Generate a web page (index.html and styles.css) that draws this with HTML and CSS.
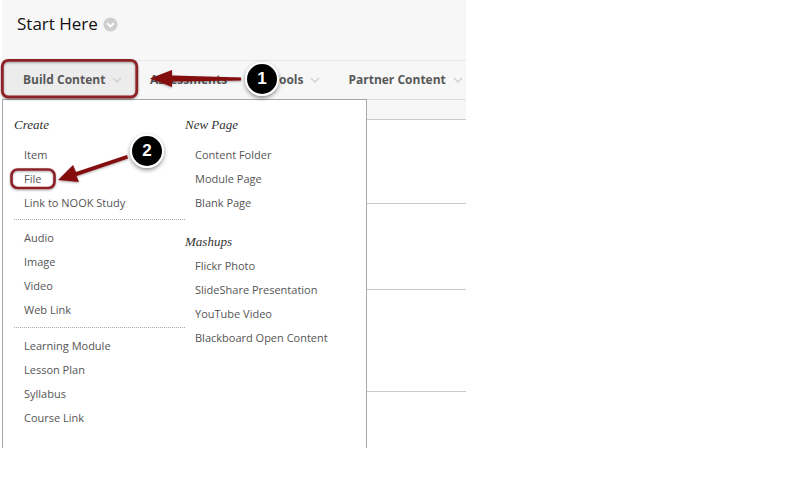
FILE: index.html
```html
<!DOCTYPE html>
<html lang="en">
<head>
<meta charset="utf-8">
<title>Start Here</title>
<link rel="stylesheet" href="styles.css">
</head>
<body>
<div class="page">
  <header class="title-bar">
    <h1 class="title">Start Here</h1>
    <svg class="title-icon" width="15" height="15" viewBox="0 0 15 15"><circle cx="7.5" cy="7.5" r="7" fill="#cfcfcf"/><path d="M4.2 6.2 7.5 9.4 10.8 6.2" fill="none" stroke="#fff" stroke-width="2"/></svg>
  </header>
  <nav class="toolbar">
    <div class="tool tool-active">Build Content<svg class="chev" width="10" height="6" viewBox="0 0 10 6"><path d="M1 1 5 5 9 1" fill="none" stroke="#cfcfcf" stroke-width="1.3"/></svg></div>
    <div class="tool tool-assess">Assessments</div>
    <div class="tool tool-tools">Tools<svg class="chev" width="10" height="6" viewBox="0 0 10 6"><path d="M1 1 5 5 9 1" fill="none" stroke="#cfcfcf" stroke-width="1.3"/></svg></div>
    <div class="tool tool-partner">Partner Content<svg class="chev" width="10" height="6" viewBox="0 0 10 6"><path d="M1 1 5 5 9 1" fill="none" stroke="#cfcfcf" stroke-width="1.3"/></svg></div>
  </nav>
  <div class="subbar"></div>
  <div class="rows">
    <div class="row row-a"></div>
    <div class="row row-b"></div>
    <div class="row row-c"></div>
  </div>

  <div class="menu">
    <div class="col col-left">
      <h2 class="menu-head">Create</h2>
      <ul class="group group-first">
        <li>Item</li><li>File</li><li>Link to NOOK Study</li>
      </ul>
      <ul class="group group-dotted">
        <li>Audio</li><li>Image</li><li>Video</li><li>Web Link</li>
      </ul>
      <ul class="group group-dotted">
        <li>Learning Module</li><li>Lesson Plan</li><li>Syllabus</li><li>Course Link</li>
      </ul>
    </div>
    <div class="col col-right">
      <h2 class="menu-head">New Page</h2>
      <ul class="group group-first">
        <li>Content Folder</li><li>Module Page</li><li>Blank Page</li>
      </ul>
      <h2 class="menu-head menu-head-second">Mashups</h2>
      <ul class="group group-second">
        <li>Flickr Photo</li><li>SlideShare Presentation</li><li>YouTube Video</li><li>Blackboard Open Content</li>
      </ul>
    </div>
  </div>
</div>

<svg class="marks" width="798" height="485" viewBox="0 0 798 485">
  <defs>
    <filter id="soft" x="-30%" y="-30%" width="160%" height="170%"><feDropShadow dx="0" dy="1" stdDeviation="1" flood-color="#000" flood-opacity=".35"/></filter>
    <filter id="softer" x="-40%" y="-40%" width="180%" height="190%"><feDropShadow dx="0" dy="2" stdDeviation="2" flood-color="#000" flood-opacity=".45"/></filter>
  </defs>
  <rect x="2.3" y="60.3" width="134.5" height="36.7" rx="6" fill="none" stroke="#8c2028" stroke-width="2.8" filter="url(#soft)"/>
  <rect x="11.5" y="169.5" width="43" height="18.5" rx="6" fill="none" stroke="#8c2028" stroke-width="2.6" filter="url(#soft)"/>
  <path d="M241 77.5 172 75.5 172 70 150 78.5 172 87 172 81.5 241 80.5Z" fill="#840a10" filter="url(#soft)"/>
  <path d="M127 155 76 172 73 165 58 180 79 182 76.5 176 128 158.5Z" fill="#840a10" filter="url(#soft)"/>
  <circle cx="262" cy="79" r="16" fill="#000" stroke="#fff" stroke-width="2" filter="url(#softer)"/>
  <circle cx="147" cy="151" r="16" fill="#000" stroke="#fff" stroke-width="2" filter="url(#softer)"/>
</svg>
<span class="badge badge-one">1</span>
<span class="badge badge-two">2</span>
</body>
</html>
```
FILE: styles.css
```css
* { box-sizing: border-box; }
html, body { margin: 0; padding: 0; background: #fff; }
body { width: 798px; height: 485px; overflow: hidden; position: relative; font-family: "Open Sans", sans-serif; }
.page { position: relative; width: 464px; height: 448px; margin-left: 2px; overflow: hidden; background: #fff; }
.title-bar { height: 60px; background: #f7f7f7; display: flex; align-items: center; padding: 0 0 12px 15px; gap: 5px; }
.title { margin: 0; font-size: 17px; font-weight: 400; line-height: 24px; color: #111; }
.title-icon { margin-top: 1px; }
.toolbar { height: 40px; background: #f7f7f7; border-top: 1px solid #e6e6e6; border-bottom: 1px solid #dedede; display: flex; align-items: center; position: relative; }
.tool { font-size: 12px; font-weight: 700; color: #595959; display: flex; align-items: center; gap: 7px; white-space: nowrap; padding-bottom: 2px; }
.chev { margin-top: 2px; }
.tool-active { width: 135px; height: 38px; padding-left: 21px; background: #ececec; border-radius: 5px; }
.tool-assess { margin-left: 13px; width: 122px; }
.tool-partner { margin-left: 28px; }
.subbar { height: 20px; background: #f7f7f7; border-bottom: 1px solid #c9c9c9; }
.row { border-bottom: 1px solid #c9c9c9; }
.row-a { height: 84px; }
.row-b { height: 86px; }
.row-c { height: 102px; }
.menu { position: absolute; left: 0; top: 99px; width: 365px; height: 360px; background: #fff; border: 1px solid #a8a8a8; display: flex; }
.col-left { width: 182px; padding: 0 0 0 11px; }
.col-right { flex: 1; }
.menu-head { margin: 0; font-family: "Liberation Serif", serif; font-style: italic; font-weight: 400; font-size: 13px; line-height: 20px; color: #333; padding-top: 15px; height: 35px; }
.group { list-style: none; margin: 0; padding: 0 0 0 10px; }
.group li { height: 24px; line-height: 24px; font-size: 11px; color: #555; white-space: nowrap; }
.group-first { padding-top: 8px; }
.group-dotted { border-top: 1px dotted #a8a8a8; margin: 4px 0 0 0; padding-top: 6px; width: 171px; }
.group-first + .group-dotted { margin-top: 4px; }
.group-dotted + .group-dotted { margin-top: 5px; }
.menu-head-second { height: 20px; padding-top: 0; margin-top: 17px; }
.group-second { padding-top: 2px; }
.marks { position: absolute; left: 0; top: 0; pointer-events: none; }
.badge { position: absolute; width: 32px; text-align: center; font-family: "Liberation Sans", sans-serif; font-weight: 700; font-size: 17px; line-height: 20px; color: #fff; }
.badge-one { left: 246px; top: 69px; }
.badge-two { left: 131px; top: 141px; }
```
